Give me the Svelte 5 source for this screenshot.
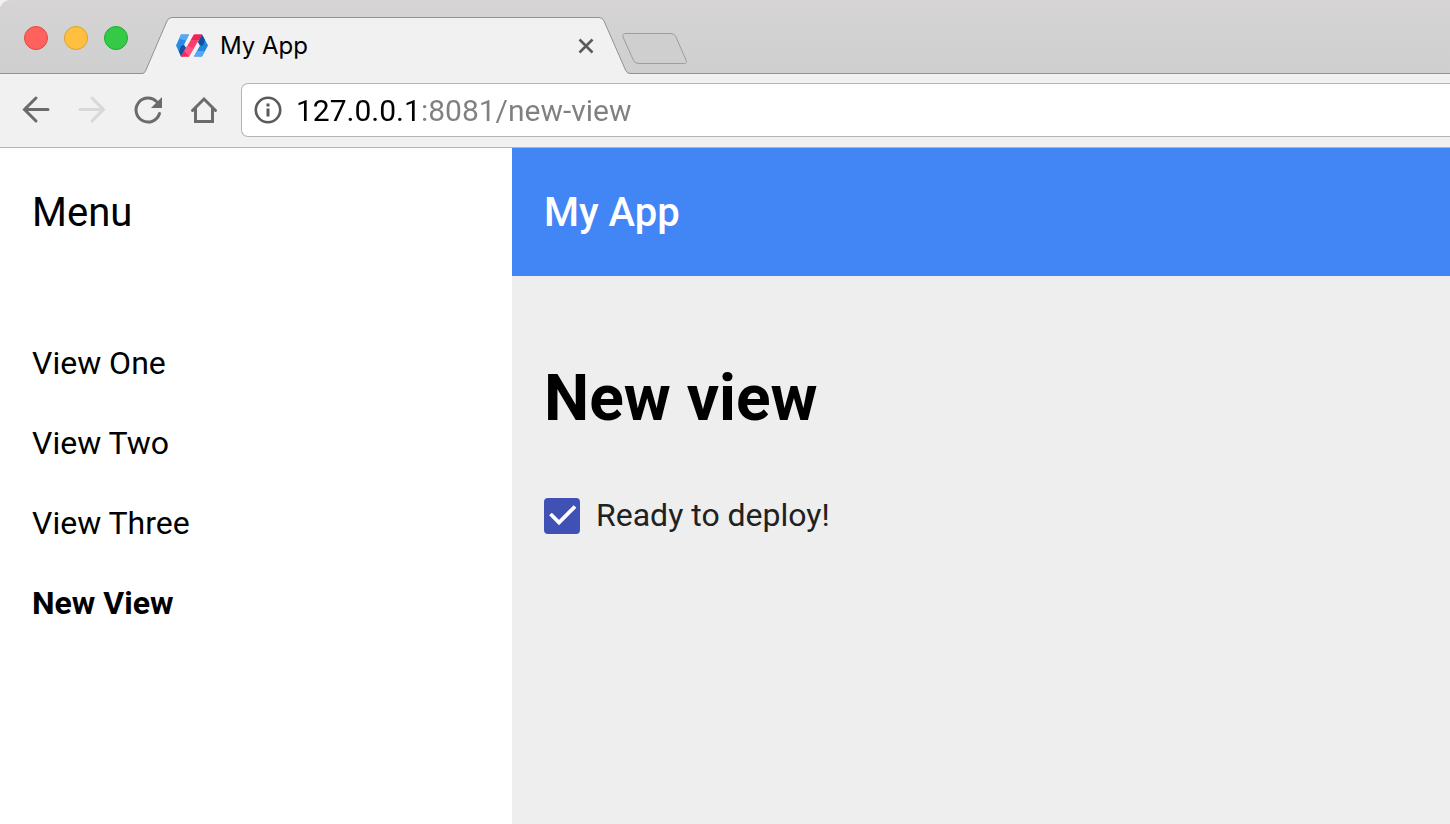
<script>
  let ready = $state(true);
  let address = $state('127.0.0.1:8081/new-view');
  const views = [
    { label: 'View One', href: '#view-one' },
    { label: 'View Two', href: '#view-two' },
    { label: 'View Three', href: '#view-three' },
    { label: 'New View', href: '#new-view', current: true }
  ];
</script>

<div class="window">
  <header class="chrome">
    <div class="tabstrip">
      <div class="lights">
        <button class="light red" aria-label="Close window"></button>
        <button class="light yellow" aria-label="Minimize window"></button>
        <button class="light green" aria-label="Zoom window"></button>
      </div>
      <div class="tab">
        <svg class="tab-shape" viewBox="0 0 488 57" aria-hidden="true">
          <path d="M0 57 Q2.500 56 3.500 54 L25 4 Q26.500 0.500 30 0.500 H457 Q460.500 0.500 462 4 L483.500 53 Q485 56.500 488 56.500 V57 Z" fill="#f1f1f1" />
          <path d="M0 56.500 Q2.500 56.500 3.500 54 L25 4 Q26.500 0.500 30 0.500 H457 Q460.500 0.500 462 4 L483.500 53 Q485 56.500 488 56.500" fill="none" stroke="#929292" />
        </svg>
        <svg class="favicon" viewBox="0 0 32 23" aria-hidden="true">
          <path d="M5 0.500H13L8 11L10 14L7 22.500H5L0 11.500Z" fill="#248bea" />
          <path d="M5 0.500H13L10 6.500L3 5Z" fill="#5aa7f1" />
          <path d="M5 12L8 11L10 14L6 22.500H5L3 17.500Z" fill="#174f9f" />
          <path d="M18 0.500H26L13 22.500H5Z" fill="#fb3b6d" />
          <path d="M18 0.500H26L23 6L15 6Z" fill="#ef2456" />
          <path d="M11 12L18 14L13 22.500H5Z" fill="#ff5680" />
          <path d="M5 22.500L8 17L13 22.500Z" fill="#f02b5f" />
          <path d="M26 0.500L32 11.500L26 22.500H18L24 11.500L22 8Z" fill="#2386e0" />
          <path d="M26 0.500L29 6L27 11.500H24L22 8Z" fill="#174f9f" />
          <path d="M21 17L29 17L26 22.500H18Z" fill="#5aa7f1" />
        </svg>
        <span class="tab-title">My App</span>
        <button class="close" aria-label="Close tab">
          <svg viewBox="0 0 16 16" width="16" height="16" aria-hidden="true">
            <path d="M1.500 1.500L14.500 14.500M14.500 1.500L1.500 14.500" stroke="#5a5a5a" stroke-width="2.600" />
          </svg>
        </button>
      </div>
      <button class="new-tab" aria-label="New tab">
        <svg viewBox="0 0 68 33" width="68" height="33" aria-hidden="true">
          <path d="M5 1.500H50Q53 1.500 54.500 4L65 28Q66.500 31.500 63.500 31.500H18Q14 31.500 12.500 28.500L2 5Q1 1.500 5 1.500Z" fill="#cfcfcf" stroke="#9d9d9d" />
        </svg>
      </button>
    </div>

    <div class="toolbar">
      <nav class="controls" aria-label="Browser">
        <button class="tool" aria-label="Back">
          <svg viewBox="0 0 32 32" aria-hidden="true"><path d="M28 15.500H4.500M16 4L4.500 15.500L16 27" /></svg>
        </button>
        <button class="tool faded" aria-label="Forward" disabled>
          <svg viewBox="0 0 32 32" aria-hidden="true"><path d="M4 15.500H27.500M16 4L27.500 15.500L16 27" /></svg>
        </button>
        <button class="tool" aria-label="Reload">
          <svg viewBox="0 0 32 32" aria-hidden="true">
            <path d="M27.500 19.500A12 12 0 1 1 24.500 7.500" />
            <path class="solid" d="M30 3V14H19Z" />
          </svg>
        </button>
        <button class="tool" aria-label="Home">
          <svg viewBox="0 0 32 32" aria-hidden="true"><path d="M4.500 16.500L16 5L27.500 16.500M7.500 14.500V27.500H24.500V14.500" /></svg>
        </button>
      </nav>
      <div class="omnibox">
        <svg class="info" viewBox="0 0 28 28" aria-hidden="true">
          <circle cx="14" cy="14" r="12.200" fill="none" stroke="#5a5a5a" stroke-width="2.600" />
          <path d="M14 7.500V10.500M14 12.500V20.500" stroke="#5a5a5a" stroke-width="3" />
        </svg>
        <input class="address" type="text" aria-label="Address" bind:value={address} spellcheck="false" />
      </div>
    </div>
  </header>

  <div class="app">
    <aside class="drawer">
      <div class="bar">Menu</div>
      <nav class="views" aria-label="Views">
        {#each views as view}
          <a href={view.href} class:current={view.current} aria-current={view.current ? 'page' : undefined}>{view.label}</a>
        {/each}
      </nav>
    </aside>
    <div class="main">
      <header class="bar blue">My App</header>
      <main class="content">
        <h1>New view</h1>
        <label class="check">
          <span class="box">
            <input type="checkbox" bind:checked={ready} />
            {#if ready}
              <svg viewBox="0 0 36 36" aria-hidden="true"><path d="M6.500 16L15 24.500L31 8.500" fill="none" stroke="#fff" stroke-width="3.800" /></svg>
            {/if}
          </span>
          <span>Ready to deploy!</span>
        </label>
      </main>
    </div>
  </div>
</div>

<style>
  :global(body) {
    margin: 0;
    background: #fff;
  }

  .window {
    display: flex;
    flex-direction: column;
    min-height: 100vh;
    font-family: Roboto, sans-serif;
    color: #000;
  }

  button {
    padding: 0;
    border: 0;
    background: none;
  }

  svg {
    display: block;
  }

  .chrome {
    font-family: Inter, sans-serif;
    background: #f1f1f1;
    border-bottom: 1px solid #b4b4b4;
  }

  .tabstrip {
    display: flex;
    align-items: flex-end;
    height: 74px;
    background: linear-gradient(#d6d4d5, #cfcfcf);
    box-shadow: inset 0 -1px #929292;
    border-top-left-radius: 10px;
    overflow: hidden;
  }

  .lights {
    display: flex;
    gap: 16px;
    padding: 0 14px 24px 24px;
  }

  .light {
    box-sizing: border-box;
    width: 24px;
    height: 24px;
    border: 1px solid;
    border-radius: 50%;
  }

  .red {
    background: #ff625c;
    border-color: #e14942;
  }

  .yellow {
    background: #ffbf40;
    border-color: #dfa023;
  }

  .green {
    background: #34ca48;
    border-color: #1dac2c;
  }

  .tab {
    position: relative;
    display: flex;
    align-items: center;
    box-sizing: border-box;
    width: 488px;
    height: 57px;
    padding: 0 36px 0 34px;
  }

  .tab-shape {
    position: absolute;
    inset: 0;
    width: 100%;
    height: 100%;
  }

  .favicon {
    position: relative;
    width: 32px;
    height: 23px;
  }

  .tab-title {
    position: relative;
    flex: 1;
    margin-left: 12px;
    font-size: 24px;
    line-height: 32px;
  }

  .close {
    position: relative;
  }

  .new-tab {
    margin: 0 0 9px -9px;
  }

  .toolbar {
    display: flex;
    align-items: center;
    gap: 21px;
    box-sizing: border-box;
    height: 73px;
    padding: 0 0 1px 20px;
  }

  .controls {
    display: flex;
    gap: 24px;
  }

  .tool {
    width: 32px;
    height: 32px;
  }

  .tool path {
    fill: none;
    stroke: #6b6b6b;
    stroke-width: 3;
    stroke-linecap: round;
  }

  .tool .solid {
    fill: #6b6b6b;
    stroke: none;
  }

  .faded path {
    stroke: #d8d8d8;
  }

  .omnibox {
    display: flex;
    align-items: center;
    flex: 1;
    gap: 14px;
    box-sizing: border-box;
    height: 54px;
    padding-left: 12px;
    background: #fff;
    border: 1px solid #b4b4b4;
    border-right: 0;
    border-radius: 7px 0 0 7px;
  }

  .info {
    width: 28px;
    height: 28px;
  }

  .address {
    flex: 1;
    min-width: 0;
    padding: 2px 0 0;
    border: 0;
    outline: 0;
    font: 30px/36px Roboto, sans-serif;
    color: transparent;
    caret-color: #000;
    background: linear-gradient(90deg, #000 125px, #808080 125px);
    -webkit-background-clip: text;
    background-clip: text;
  }

  .app {
    display: flex;
    flex: 1;
  }

  .drawer {
    flex: none;
    width: 512px;
    background: #fff;
  }

  .main {
    flex: 1;
    background: #eee;
  }

  .bar {
    padding: 2px 32px 0;
    font-size: 40px;
    line-height: 126px;
  }

  .blue {
    background: #4285f4;
    color: #fff;
    font-weight: 500;
  }

  .views {
    display: flex;
    flex-direction: column;
    padding: 47px 32px;
  }

  .views a {
    font-size: 32px;
    line-height: 80px;
    color: #000;
    text-decoration: none;
  }

  .views .current {
    font-weight: 700;
  }

  .content {
    padding: 85px 32px;
  }

  h1 {
    margin: 0 0 61px;
    font-size: 64px;
    line-height: 76px;
    font-weight: 700;
  }

  .check {
    display: inline-flex;
    align-items: flex-start;
    gap: 16px;
    font-size: 32px;
    line-height: 34px;
    color: #212121;
  }

  .box {
    display: grid;
  }

  .box > * {
    grid-area: 1 / 1;
    width: 36px;
    height: 36px;
    pointer-events: none;
  }

  .box input {
    appearance: none;
    box-sizing: border-box;
    margin: 0;
    border: 4px solid #5a5a5a;
    border-radius: 4px;
    pointer-events: auto;
  }

  .box input:checked {
    background: #3f51b5;
    border-color: #3f51b5;
  }
</style>
